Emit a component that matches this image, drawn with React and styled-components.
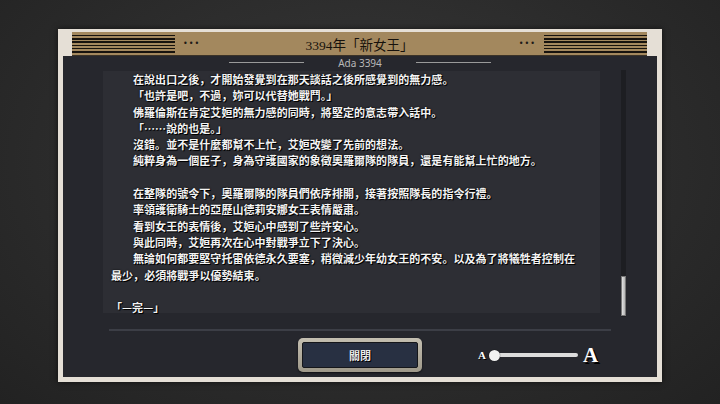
import React from "react";
import styled, { createGlobalStyle } from "styled-components";

const GlobalStyle = createGlobalStyle`
  html, body {
    margin: 0;
    padding: 0;
    width: 720px;
    height: 404px;
    overflow: hidden;
    background: radial-gradient(ellipse at 50% 40%, #383838 0%, #2c2c2c 55%, #222 100%);
  }
`;

const lines = [
  { text: "在說出口之後，才開始發覺到在那天談話之後所感覺到的無力感。", indent: true },
  { text: "「也許是吧，不過，妳可以代替她戰鬥。」", indent: true },
  { text: "佛羅倫斯在肯定艾姮的無力感的同時，將堅定的意志帶入話中。", indent: true },
  { text: "「……說的也是。」", indent: true },
  { text: "沒錯。並不是什麼都幫不上忙，艾姮改變了先前的想法。", indent: true },
  { text: "純粹身為一個臣子，身為守護國家的象徵奧羅爾隊的隊員，還是有能幫上忙的地方。", indent: true },
  { text: "", indent: false },
  { text: "在整隊的號令下，奧羅爾隊的隊員們依序排開，接著按照隊長的指令行禮。", indent: true },
  { text: "率領護衛騎士的亞歷山德莉安娜女王表情嚴肅。", indent: true },
  { text: "看到女王的表情後，艾姮心中感到了些許安心。", indent: true },
  { text: "與此同時，艾姮再次在心中對戰爭立下了決心。", indent: true },
  { text: "無論如何都要堅守托雷依德永久要塞，稍微減少年幼女王的不安。以及為了將犧牲者控制在", indent: true },
  { text: "最少，必須將戰爭以優勢結束。", indent: false },
  { text: "", indent: false },
  { text: "「—完—」", indent: false },
];

const App = () => {
  return (
    <>
      <GlobalStyle />
      <Screen>
        <Panel>
          <Header>
            <Stripes />
            <Dots>•••</Dots>
            <Title>3394年「新女王」</Title>
            <Dots>•••</Dots>
            <Stripes />
          </Header>
          <Body>
            <Caption>
              <Rule />
              <span>Ada 3394</span>
              <Rule />
            </Caption>
            <Middle>
              <TextBox>
                {lines.map((l, i) => (
                  <Line key={i} $indent={l.indent}>
                    {l.text || "\u00a0"}
                  </Line>
                ))}
              </TextBox>
              <Track>
                <Thumb />
              </Track>
            </Middle>
            <Separator />
            <Footer>
              <CloseButton>
                <span>關閉</span>
              </CloseButton>
              <SizeSlider>
                <SmallA>A</SmallA>
                <SliderTrack>
                  <Knob />
                </SliderTrack>
                <BigA>A</BigA>
              </SizeSlider>
            </Footer>
          </Body>
        </Panel>
      </Screen>
    </>
  );
};

// 화면 전체
const Screen = styled.div`
  width: 720px;
  height: 404px;
  padding-top: 29px;
  box-sizing: border-box;
`;

const Panel = styled.div`
  width: 604px;
  height: 353px;
  margin: 0 auto;
  box-sizing: border-box;
  background: #e5dfd6;
  padding: 3px 5px 5px 5px;
  display: flex;
  flex-direction: column;
  box-shadow: 0 0 6px rgba(0, 0, 0, 0.6);
`;

const Header = styled.div`
  height: 24px;
  margin: 0 10px 0 9px;
  background: #a3885e;
  border-bottom: 1px solid #3b3328;
  display: flex;
  align-items: center;
  box-sizing: border-box;
`;

const Stripes = styled.div`
  width: 103px;
  height: 22px;
  background: repeating-linear-gradient(
    to bottom,
    #a3885e 0px,
    #a3885e 1.9px,
    #17130e 1.9px,
    #17130e 3.3px
  );
`;

const Dots = styled.div`
  font-family: "DejaVu Sans", sans-serif;
  font-size: 8px;
  letter-spacing: 1px;
  color: #1d1a16;
  margin: 0 8px;
`;

const Title = styled.div`
  flex: 1;
  text-align: center;
  font-family: "Liberation Serif", "Noto Sans CJK TC", serif;
  font-size: 13.5px;
  color: #17120c;
`;

const Body = styled.div`
  flex: 1;
  background: #26272d;
  display: flex;
  flex-direction: column;
`;

const Caption = styled.div`
  height: 13px;
  display: flex;
  align-items: center;
  justify-content: center;
  gap: 34px;
  font-family: "Noto Sans", sans-serif;
  font-size: 10px;
  color: #b8b8b8;
`;

const Rule = styled.div`
  width: 75px;
  height: 1px;
  background: #9a9a9a;
`;

const Middle = styled.div`
  height: 247px;
  margin-top: 1px;
  display: flex;
  align-items: flex-start;
`;

const TextBox = styled.div`
  width: 497px;
  height: 242px;
  margin: 1px 0 0 40px;
  padding: 0 0 0 8px;
  box-sizing: border-box;
  background: #2d2e34;
`;

const Line = styled.div`
  height: 16.3px;
  line-height: 16.3px;
  white-space: nowrap;
  font-family: "Noto Sans CJK SC", "Noto Sans CJK TC", sans-serif;
  font-weight: 700;
  font-size: 11px;
  letter-spacing: 0.05px;
  color: #f4f4f4;
  text-indent: ${(p) => (p.$indent ? "22px" : "0")};
  text-shadow: 1px 1px 0 #000, 0 0 2px #000;
`;

const Track = styled.div`
  width: 5px;
  height: 247px;
  margin-left: 21px;
  background: #1d1e22;
  position: relative;
`;

const Thumb = styled.div`
  position: absolute;
  left: 0;
  top: 206px;
  width: 5px;
  height: 40px;
  box-sizing: border-box;
  background: linear-gradient(to right, #e2e2e2, #b4b4b4);
  border: 1px solid #777;
`;

const Separator = styled.div`
  width: 502px;
  height: 2px;
  margin: 12px 0 0 46px;
  background: #3c3e46;
`;

const Footer = styled.div`
  display: flex;
  align-items: center;
  margin-top: 7px;
`;

const CloseButton = styled.div`
  width: 124px;
  height: 34px;
  margin-left: 235px;
  box-sizing: border-box;
  padding: 4px;
  border-radius: 5px;
  background: linear-gradient(to bottom, #c4bfb1, #9f998a);
  box-shadow: 0 1px 2px rgba(0, 0, 0, 0.6);

  span {
    display: flex;
    align-items: center;
    justify-content: center;
    height: 100%;
    box-sizing: border-box;
    border: 1px solid #15161a;
    border-radius: 2px;
    background: #283042;
    font-family: "Noto Sans CJK TC", sans-serif;
    font-weight: 700;
    font-size: 11px;
    color: #eaeaea;
    text-shadow: 1px 1px 0 #000;
  }
`;

const SizeSlider = styled.div`
  display: flex;
  align-items: center;
  margin-left: 56px;
`;

const SmallA = styled.span`
  font-family: "Liberation Serif", serif;
  font-weight: 700;
  font-size: 11px;
  color: #fff;
  text-shadow: 1px 1px 0 #000;
  margin-right: 8px;
`;

const SliderTrack = styled.div`
  width: 84px;
  height: 4px;
  border-radius: 2px;
  background: #dcdcdc;
  position: relative;
`;

const Knob = styled.div`
  position: absolute;
  left: -5px;
  top: -3.5px;
  width: 11px;
  height: 11px;
  border-radius: 50%;
  background: #f2f2f2;
  box-shadow: 0 0 1px #000;
`;

const BigA = styled.span`
  font-family: "Liberation Serif", serif;
  font-weight: 700;
  font-size: 21px;
  color: #fff;
  text-shadow: 2px 2px 0 #000;
  margin-left: 5px;
`;

export default App;
